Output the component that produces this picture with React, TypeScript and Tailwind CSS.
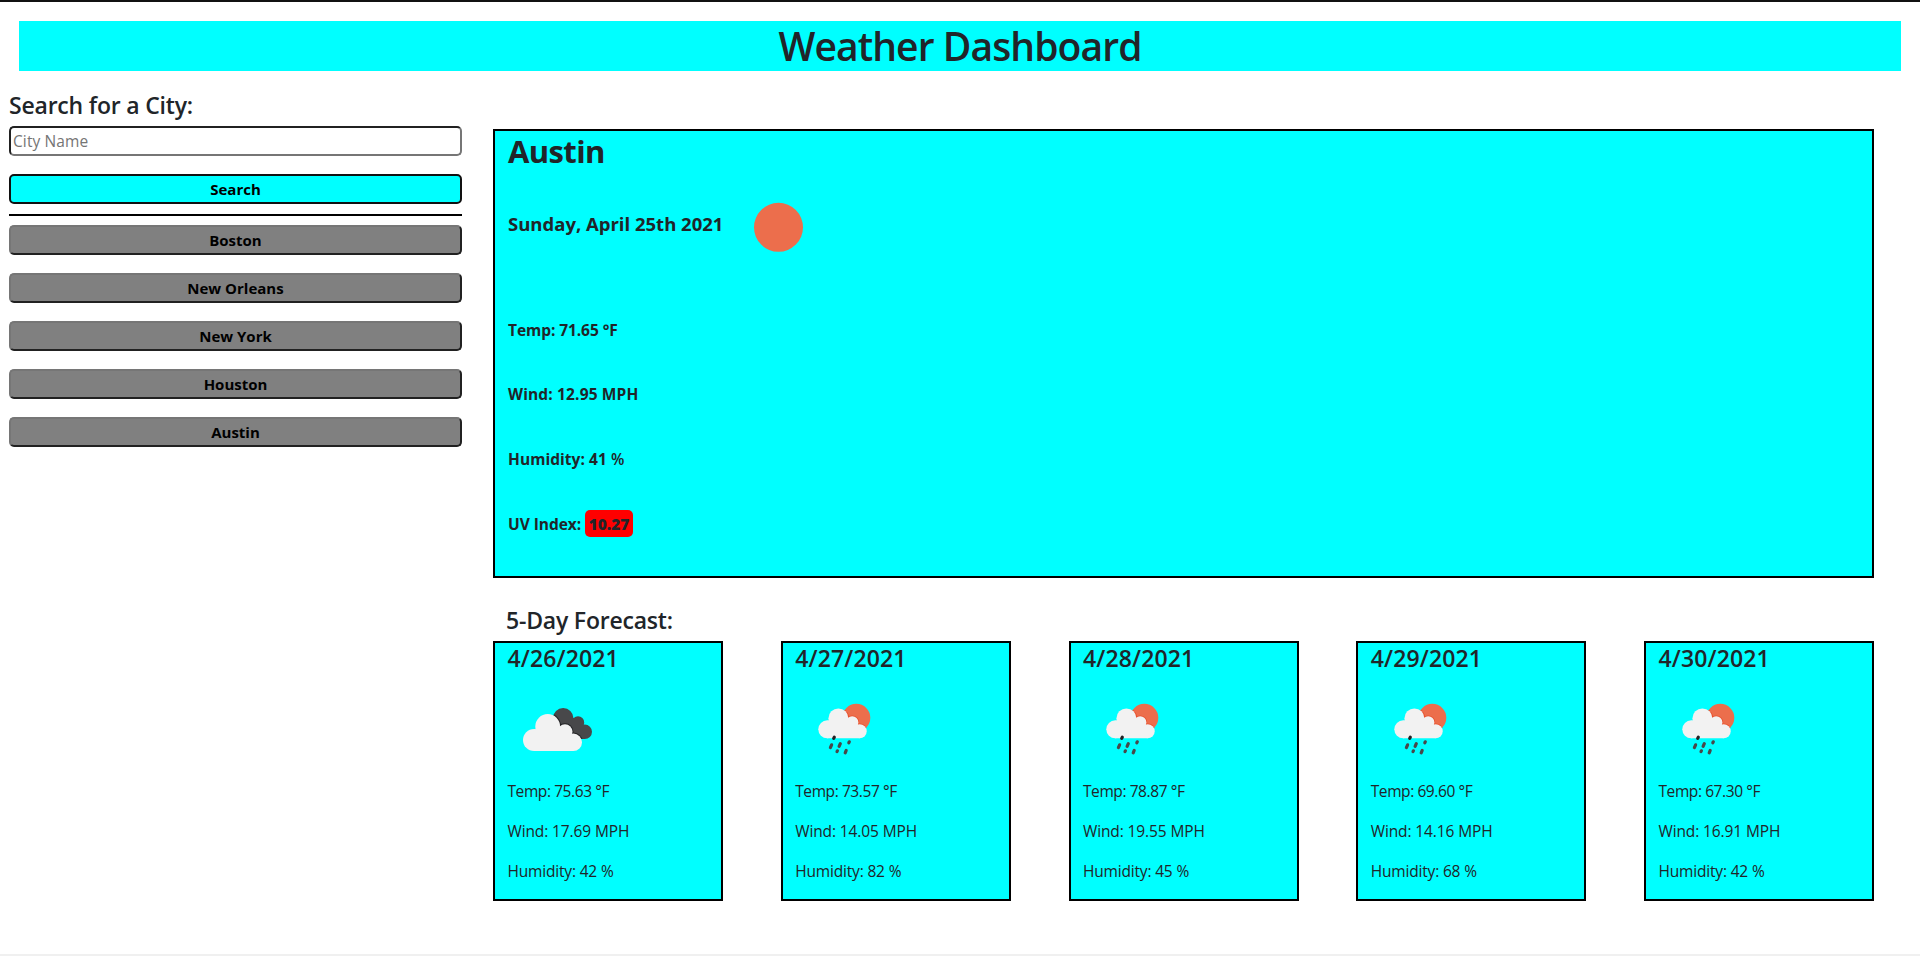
import React from "react";

const cities = ["Boston", "New Orleans", "New York", "Houston", "Austin"];

const days = [
  { date: "4/26/2021", icon: "clouds", temp: "75.63", wind: "17.69", hum: "42" },
  { date: "4/27/2021", icon: "rain", temp: "73.57", wind: "14.05", hum: "82" },
  { date: "4/28/2021", icon: "rain", temp: "78.87", wind: "19.55", hum: "45" },
  { date: "4/29/2021", icon: "rain", temp: "69.60", wind: "14.16", hum: "68" },
  { date: "4/30/2021", icon: "rain", temp: "67.30", wind: "16.91", hum: "42" },
];

function Clouds() {
  return (
    <svg width="100" height="100" viewBox="0 0 100 100" className="block">
      <defs>
        <clipPath id="back-cloud">
          <circle cx="55.2" cy="38.2" r="10.2" />
          <circle cx="70" cy="42.5" r="6.2" />
          <circle cx="76.8" cy="51.8" r="7.2" />
          <path d="M50 38 L68 38 L78 50 L76 59 L66 59 L50 48Z" />
        </clipPath>
      </defs>
      <g clipPath="url(#back-cloud)">
        <rect width="100" height="100" fill="#48484a" />
        <g fill="#222224">
          <circle cx="39.7" cy="46.4" r="13.4" />
          <circle cx="57" cy="51.7" r="8.5" />
          <circle cx="65.3" cy="62.3" r="9.7" />
        </g>
      </g>
      <g fill="#f2f2f2">
        <circle cx="26.1" cy="60" r="11.1" />
        <circle cx="39.7" cy="46.4" r="12.4" />
        <circle cx="57" cy="51.7" r="7.5" />
        <circle cx="65.3" cy="62.3" r="8.7" />
        <path d="M26 50 L40 45 L58 50 L66 60 L65.3 71 L26 71.1Z" />
      </g>
    </svg>
  );
}

function Rain() {
  return (
    <svg width="100" height="100" viewBox="0 0 100 100" className="block">
      <defs>
        <clipPath id="sun-disc">
          <circle cx="61.3" cy="37.8" r="14" />
        </clipPath>
      </defs>
      <g clipPath="url(#sun-disc)">
        <rect width="100" height="100" fill="#ec6e4c" />
        <g fill="#e8502c">
          <circle cx="43.4" cy="38.4" r="10.8" />
          <circle cx="57.2" cy="42.5" r="7" />
          <circle cx="64.7" cy="51.3" r="7.8" />
        </g>
      </g>
      <g fill="#f2f2f2">
        <circle cx="32.3" cy="49.3" r="9" />
        <circle cx="43.4" cy="38.4" r="10" />
        <circle cx="57.2" cy="42.5" r="6.2" />
        <circle cx="64.7" cy="51.3" r="7" />
        <path d="M32 41 L43 38 L58 42 L65 50 L64.7 58.3 L32 58.3Z" />
      </g>
      <g stroke="#48484a" strokeWidth="3.2" strokeLinecap="round">
        <path d="M39.3 57.2 L38.7 58.4" stroke="#222224" />
        <path d="M36.6 64.8 L35.4 67.6" />
        <path d="M45.3 63.6 L44.1 66.4" />
        <path d="M54.3 61.8 L53.8 62.8" />
        <path d="M42.4 70.8 L42 71.6" />
        <path d="M51.2 70.4 L50.2 72.8" />
      </g>
    </svg>
  );
}

export default function App() {
  return (
    <div className="flex h-[956px] w-[1920px] flex-col overflow-hidden border-t-2 border-b-2 border-t-[#111111] border-b-[#f0f0f0] bg-white font-['Open_Sans','Noto_Sans',sans-serif] text-[#212529] whitespace-nowrap">
      <h1 className="mx-[19px] mt-[19px] h-[50px] shrink-0 bg-[#00ffff] text-center text-[39px] leading-[50px] font-semibold tracking-[-0.9px]">
        Weather Dashboard
      </h1>
      <div className="flex">
        <aside className="ml-[9px] flex w-[453px] flex-col pt-[19px]">
          <h2 className="h-[36px] text-[23px] leading-[31px] font-semibold tracking-[-0.2px]">Search for a City:</h2>
          <input
            className="h-[30px] rounded-[5px] border-2 border-t-[#212121] border-r-[#767676] border-b-[#767676] border-l-[#212121] px-[2px] text-[15.5px] tracking-[0.1px] placeholder:text-[#757575]"
            placeholder="City Name"
          />
          <button className="mt-[18px] h-[30px] rounded-[5px] border-2 border-[#111111] bg-[#00ffff] text-[15px] leading-[26px] font-bold text-black">
            Search
          </button>
          <hr className="mt-[10px] mb-[9px] border-t-2 border-black" />
          <div className="flex flex-col gap-[18px]">
            {cities.map((c) => (
              <button
                key={c}
                className="h-[30px] rounded-[5px] border-2 border-t-[#767676] border-r-[#212121] border-b-[#212121] border-l-[#767676] bg-[#808080] text-[15px] leading-[26px] font-bold text-black"
              >
                {c}
              </button>
            ))}
          </div>
        </aside>
        <main className="ml-[31px] w-[1381px] pt-[58px]">
          <section className="h-[449px] border-2 border-black bg-[#00ffff] pl-[13px]">
            <h2 className="h-[50px] text-[31px] leading-[40px] font-bold tracking-[-0.6px]">Austin</h2>
            <div className="flex h-[120px]">
              <p className="w-[215px] pt-[28px] text-[18.5px] leading-[30px] font-bold">Sunday, April 25th 2021</p>
              <svg width="100" height="100" viewBox="0 0 100 100" className="block">
                <circle cx="55.5" cy="46.3" r="24.5" fill="#ec6e4c" />
              </svg>
            </div>
            <p className="mt-[17px] mb-[40px] text-[15.5px] leading-6 font-bold tracking-[-0.07px]">Temp: 71.65 °F</p>
            <p className="mb-[41px] text-[15.5px] leading-6 font-bold tracking-[0.15px]">Wind: 12.95 MPH</p>
            <p className="mb-[41px] text-[15.5px] leading-6 font-bold tracking-[0.05px]">
              Humidity: 41 <span className="font-semibold">%</span>
            </p>
            <p className="flex text-[15.5px] leading-6 font-bold">
              <span className="w-[77px] tracking-[-0.05px]">UV Index:</span>
              <span className="-mt-[2px] h-[27px] w-[48px] rounded-[5px] bg-[#ff0000] text-center leading-[28px] font-extrabold">
                10.27
              </span>
            </p>
          </section>
          <h2 className="mt-[27px] ml-[13px] h-[36px] text-[23px] leading-[31px] font-semibold tracking-[-0.2px]">5-Day Forecast:</h2>
          <div className="flex justify-between">
            {days.map((d) => (
              <article key={d.date} className="h-[260px] w-[230px] border-2 border-black bg-[#00ffff] pl-[12.5px]">
                <h3 className="h-[37px] text-[23px] leading-[31px] font-semibold tracking-[0.15px]">{d.date}</h3>
                {d.icon === "clouds" ? <Clouds /> : <Rain />}
                <p className="mt-[-1px] mb-[16px] text-[15.5px] leading-6 tracking-[-0.42px]">Temp: {d.temp} °F</p>
                <p className="mb-[16px] text-[15.5px] leading-6 tracking-[-0.12px]">Wind: {d.wind} MPH</p>
                <p className="text-[15.5px] leading-6 tracking-[-0.18px]">Humidity: {d.hum} %</p>
              </article>
            ))}
          </div>
        </main>
      </div>
    </div>
  );
}
